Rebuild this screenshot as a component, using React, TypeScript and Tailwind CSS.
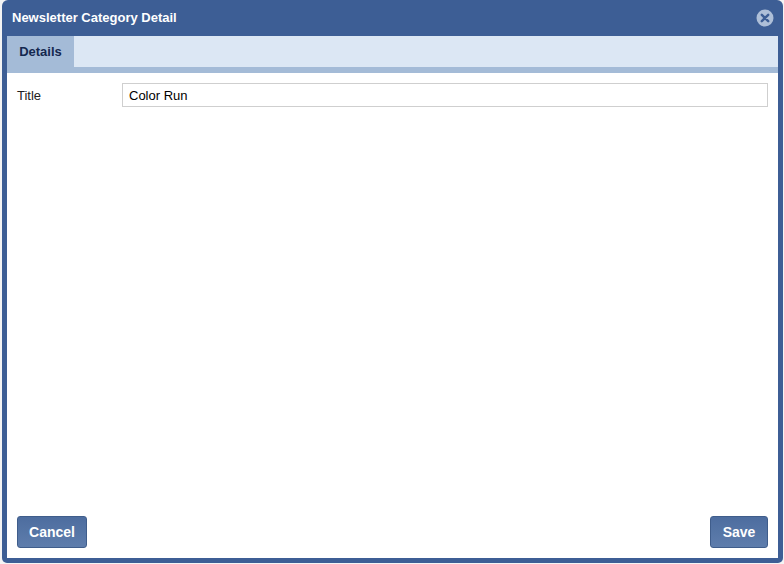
export default function App() {
  return (
    <div className="h-[564px] w-[784px] bg-[#f4f4f4] pl-[2px] pr-[1px] pb-[1px] font-['Liberation_Sans',Arial,sans-serif]">
      <div className="flex h-full flex-col overflow-hidden rounded-t-[6px] rounded-b-[5px] bg-[#3d5e95] px-[5px] pb-[5px]">
        <div className="flex h-[36px] shrink-0 items-center justify-between pl-[5px] pr-[4px]">
          <span className="text-[13px] font-bold leading-[38px] text-white">Newsletter Category Detail</span>
          <svg width="18" height="18" viewBox="0 0 18 18">
            <circle cx="9" cy="9" r="8.5" fill="#aebfd8" />
            <path d="M5.8 5.8 12.2 12.2M12.2 5.8 5.8 12.2" stroke="#3d5e95" strokeWidth="2.4" strokeLinecap="round" />
          </svg>
        </div>
        <div className="flex h-[37px] shrink-0 border-b-[6px] border-[#a4bbd7] bg-[#dce7f4]">
          <div className="flex w-[67px] items-center justify-center bg-[#a4bbd7] text-[13px] font-bold text-[#14284f]">Details</div>
        </div>
        <div className="flex min-h-0 flex-1 flex-col justify-between bg-white px-[10px] pt-[10px] pb-[10px]">
          <div className="flex items-center">
            <label className="w-[105px] text-[13px] leading-[22px] text-[#222222] pt-[1px]">Title</label>
            <input
              readOnly
              value="Color Run"
              className="h-[24px] flex-1 border border-[#cfcfcf] bg-white px-[6px] text-[13px] text-black outline-none"
            />
          </div>
          <div className="flex justify-between">
            <button className="h-[32px] w-[70px] rounded-[3px] border border-[#3f5d8b] bg-gradient-to-b from-[#4d6d9f] to-[#5e7dac] text-[14px] font-bold text-white">Cancel</button>
            <button className="h-[32px] w-[58px] rounded-[3px] border border-[#3f5d8b] bg-gradient-to-b from-[#4d6d9f] to-[#5e7dac] text-[14px] font-bold text-white">Save</button>
          </div>
        </div>
      </div>
    </div>
  )
}
